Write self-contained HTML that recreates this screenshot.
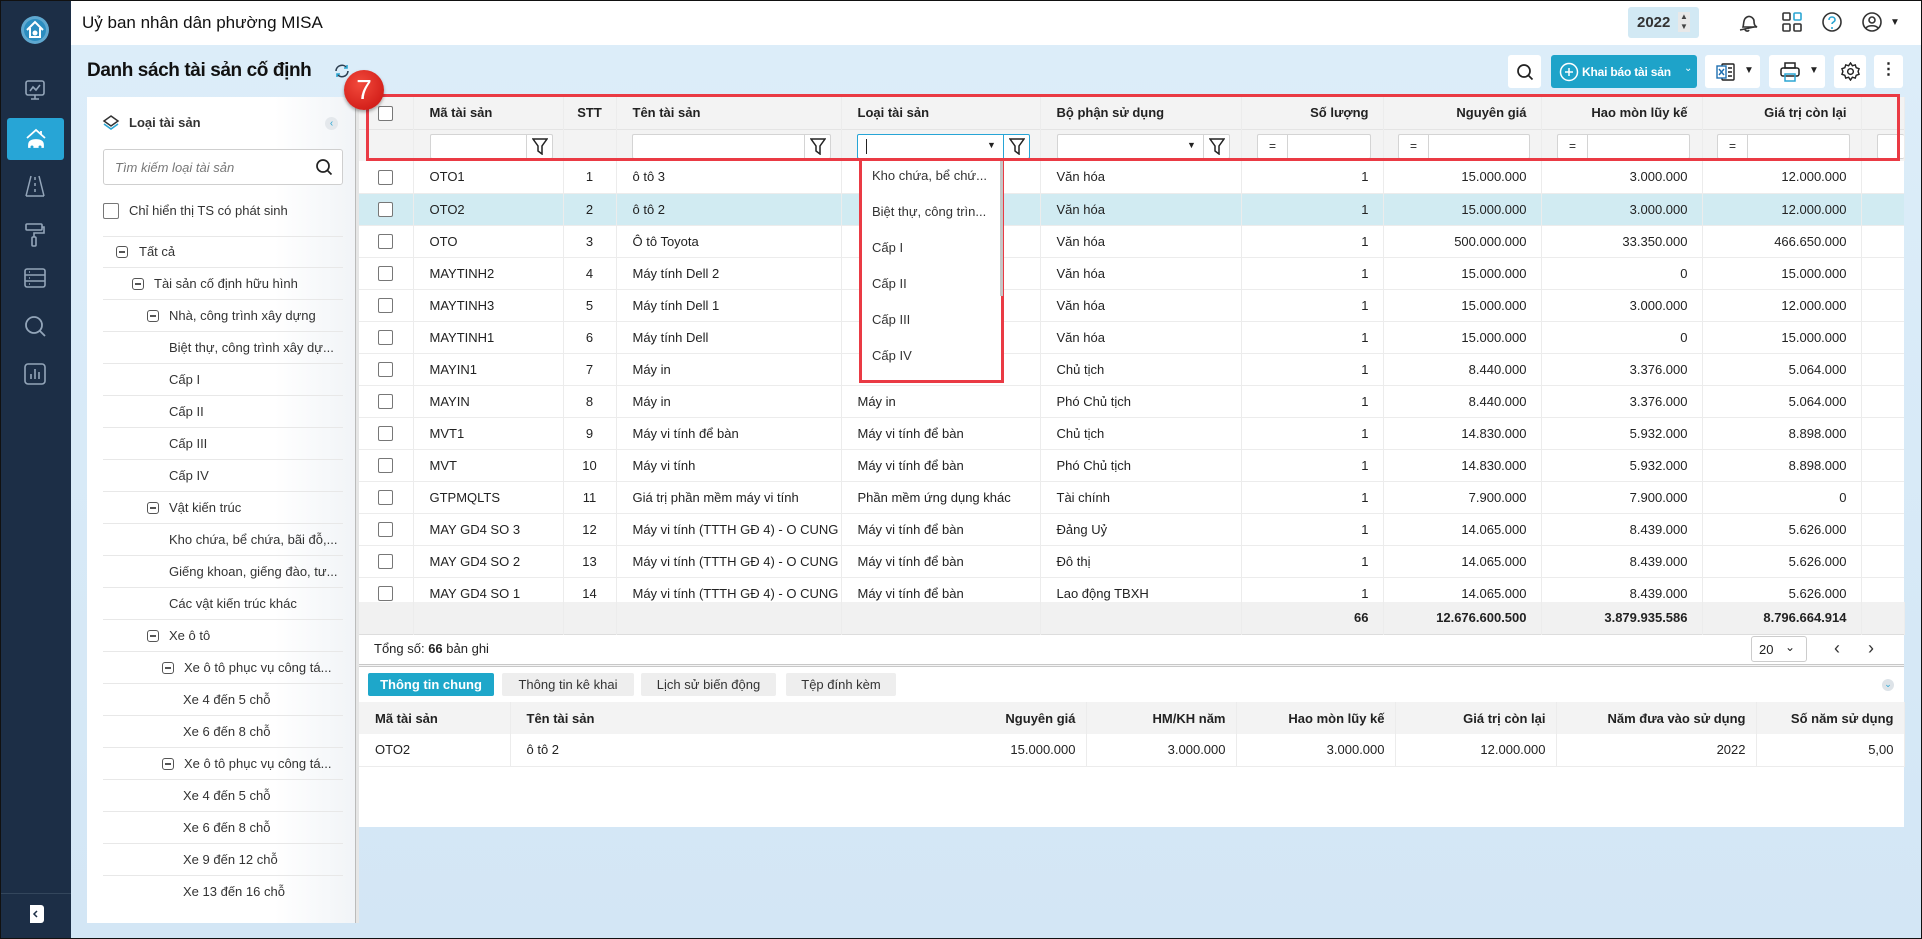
<!DOCTYPE html>
<html><head><meta charset="utf-8"><style>
*{box-sizing:border-box;margin:0;padding:0}
body{width:1922px;height:939px;overflow:hidden;font-family:"Liberation Sans",sans-serif;font-size:13px;color:#222;background:#d9eaf6;position:relative}
.a{position:absolute}
#frame{position:absolute;left:0;top:0;width:1922px;height:939px;border:1px solid #111;pointer-events:none;z-index:50}
#side{left:0;top:0;width:71px;height:939px;background:#1c2e46}
#top{left:71px;top:0;width:1851px;height:45px;background:#fff}
#bg{left:71px;top:45px;width:1851px;height:894px;background:linear-gradient(180deg,#dcedf9,#d3e6f5)}
.ico{position:absolute;left:23px}
.btn{position:absolute;background:#fff;border-radius:3px;top:55px;height:33px}
#lp{left:87px;top:97px;width:268px;height:826px;background:linear-gradient(90deg,#fff 70%,#f1f4f7)}
.tr{position:absolute;left:103px;width:240px;height:32px;border-bottom:1px solid #e8e8e8;line-height:32px;white-space:nowrap;font-size:13px;color:#333}
.mb{display:inline-block;width:12px;height:12px;border:1.5px solid #555;border-radius:3px;position:absolute;top:10px}
.mb:after{content:"";position:absolute;left:2px;right:2px;top:4px;height:1.5px;background:#555}
#main{left:359px;top:97px;width:1545px;height:730px;background:#fff}
table{border-collapse:collapse;table-layout:fixed}
td,th{height:32px;white-space:nowrap;overflow:hidden;padding:0 16px;border-right:1px solid #ececec;font-size:13px}
th{font-weight:bold;text-align:left;background:#f3f3f3;color:#222}
.r{text-align:right;padding-right:14px}
.c{text-align:center;padding:0}
tr.b td{border-bottom:1px solid #ececec}
.cb{display:inline-block;width:15px;height:15px;border:1px solid #777;border-radius:2px;background:#fff;vertical-align:middle}
.inp{position:absolute;height:25px;background:#fff;border:1px solid #d4d4d4;border-radius:2px}
.fn{position:absolute;right:0;top:0;width:26px;height:23px;border-left:1px solid #d4d4d4}
.eq{position:absolute;left:0;top:0;width:30px;height:23px;border-right:1px solid #d4d4d4;text-align:center;line-height:23px;font-size:12px}
.tab{position:absolute;top:673px;height:23px;line-height:23px;text-align:center;background:#eeeeee;border-radius:2px;font-size:13px;color:#333}
.dd{position:absolute;left:872px;font-size:13px;color:#333}
</style></head><body>
<div id="frame"></div>
<div id="side" class="a">
 <svg class="a" style="left:21px;top:16px" width="28" height="28" viewBox="0 0 28 28"><circle cx="14" cy="14" r="14" fill="#5fa8d0"/><circle cx="14" cy="14" r="11" fill="#2b8dc0"/><path d="M6 14 L14 6 L22 14 M9 12 V21 H19 V12" stroke="#fff" stroke-width="2" fill="none"/><circle cx="14" cy="17" r="2.5" fill="#fff"/></svg>
 <svg class="ico" style="top:78px" width="24" height="24" viewBox="0 0 24 24" fill="none" stroke="#93a5b9" stroke-width="1.6"><rect x="3" y="3" width="18" height="14" rx="2"/><path d="M12 17v4M8 21h8M7 13l3-4 3 3 4-5"/></svg>
 <div class="a" style="left:7px;top:118px;width:57px;height:42px;background:#27a5d6;border-radius:3px"></div>
 <svg class="ico" style="top:126px" width="26" height="26" viewBox="0 0 26 26" fill="none" stroke="#fff" stroke-width="1.8"><path d="M4 12 L13 4 L22 12"/><path d="M18 5v4"/><path d="M6 19c0-3 2-5 7-5s7 2 7 5v2H6z" fill="#fff"/><circle cx="9" cy="21" r="1.5" fill="#27a5d6" stroke="none"/><circle cx="17" cy="21" r="1.5" fill="#27a5d6" stroke="none"/></svg>
 <svg class="ico" style="top:174px" width="24" height="24" viewBox="0 0 24 24" fill="none" stroke="#93a5b9" stroke-width="1.5"><path d="M8 2L3 22M16 2l5 20M12 3v3M12 9v3M12 15v3M3 22h18"/></svg>
 <svg class="ico" style="top:222px" width="24" height="26" viewBox="0 0 24 26" fill="none" stroke="#93a5b9" stroke-width="1.6"><rect x="3" y="2" width="16" height="6" rx="1"/><path d="M19 5h2v6H11v4"/><rect x="9" y="15" width="4" height="9" rx="1"/></svg>
 <svg class="ico" style="top:267px" width="24" height="22" viewBox="0 0 24 22" fill="none" stroke="#93a5b9" stroke-width="1.6"><rect x="2" y="2" width="20" height="18" rx="2"/><path d="M2 8h20M2 14h20M6 5h1M6 11h1M6 17h1"/></svg>
 <svg class="ico" style="top:314px" width="24" height="24" viewBox="0 0 24 24" fill="none" stroke="#93a5b9" stroke-width="1.8"><circle cx="11" cy="11" r="8"/><path d="M17 17l5 5"/></svg>
 <svg class="ico" style="top:362px" width="24" height="24" viewBox="0 0 24 24" fill="none" stroke="#93a5b9" stroke-width="1.6"><rect x="2" y="2" width="20" height="20" rx="3"/><path d="M8 17v-5M12 17V7M16 17v-7"/></svg>
 <div class="a" style="left:0;top:893px;width:71px;height:1px;background:#33465c"></div>
 <svg class="a" style="left:25px;top:904px" width="20" height="20" viewBox="0 0 20 20"><rect x="1" y="1" width="18" height="18" rx="3" fill="#fff"/><rect x="1" y="1" width="4" height="18" fill="#1c2e46"/><path d="M12 7l-3 3 3 3" stroke="#1c2e46" stroke-width="1.5" fill="none"/></svg>
</div>
<div id="top" class="a">
 <div class="a" style="left:11px;top:13px;font-size:17px;color:#111">Uỷ ban nhân dân phường MISA</div>
 <div class="a" style="left:1557px;top:7px;width:71px;height:31px;background:#d2e9f4;border-radius:3px"><span class="a" style="left:9px;top:7px;font-weight:bold;font-size:15px;color:#333">2022</span><span class="a" style="left:50px;top:5px;width:12px;height:20px;background:#e8e8e8;font-size:8px;line-height:10px;text-align:center;color:#444">▲<br>▼</span></div>
 <svg class="a" style="left:1666px;top:12px" width="22" height="22" viewBox="0 0 22 22" fill="none" stroke="#333" stroke-width="1.6"><path d="M6 15c1-3 0-8 4-10s7 2 7 4c0 4 1 5 3 6z"/><path d="M3 18l14-3M8 17c0 2 3 3 4 1"/></svg>
 <svg class="a" style="left:1711px;top:12px" width="20" height="20" viewBox="0 0 20 20" fill="none" stroke="#333" stroke-width="1.6"><rect x="1" y="1" width="7" height="7" rx="1"/><rect x="12" y="1" width="7" height="7" rx="1" stroke="#2ba6d3"/><rect x="1" y="12" width="7" height="7" rx="1"/><rect x="12" y="12" width="7" height="7" rx="1"/></svg>
 <svg class="a" style="left:1750px;top:11px" width="22" height="22" viewBox="0 0 22 22" fill="none" stroke="#333" stroke-width="1.6"><circle cx="11" cy="11" r="9"/><path d="M8 9c0-2 1.5-3 3-3s3 1 3 3-3 2-3 4" stroke="#2ba6d3"/><path d="M11 16v2" stroke="#2ba6d3"/></svg>
 <svg class="a" style="left:1790px;top:11px" width="22" height="22" viewBox="0 0 22 22" fill="none" stroke="#333" stroke-width="1.6"><circle cx="11" cy="11" r="9"/><circle cx="11" cy="9" r="3"/><path d="M5 17c2-3 10-3 12 0"/></svg>
 <div class="a" style="left:1819px;top:17px;font-size:10px">▼</div>
</div>
<div id="bg" class="a"></div>
<div class="a" style="left:87px;top:60px;font-size:19px;font-weight:bold;letter-spacing:-0.4px;color:#111">Danh sách tài sản cố định</div>
<svg class="a" style="left:333px;top:63px" width="18" height="16" viewBox="0 0 18 16" fill="none" stroke="#2c3e50" stroke-width="1.6"><path d="M3 8a6 6 0 0 1 11-3M15 8a6 6 0 0 1-11 3"/><path d="M14 2v3h-3M4 14v-3h3" stroke="#2ba6d3"/></svg>
<div class="btn" style="left:1508px;width:33px"><svg class="a" style="left:8px;top:8px" width="18" height="18" viewBox="0 0 18 18" fill="none" stroke="#222" stroke-width="1.7"><circle cx="8" cy="8" r="6"/><path d="M12.5 12.5l4 4"/></svg></div>
<div class="btn" style="left:1551px;width:146px;background:#1ea3c9"><svg class="a" style="left:8px;top:7px" width="20" height="20" viewBox="0 0 20 20" fill="none" stroke="#fff" stroke-width="1.5"><circle cx="10" cy="10" r="8.5"/><path d="M10 6v8M6 10h8"/></svg><span class="a" style="left:31px;top:10px;color:#fff;font-weight:bold;font-size:12px;letter-spacing:-0.2px">Khai báo tài sản</span><span class="a" style="left:133px;top:8px;color:#fff;font-size:10px">⌄</span></div>
<div class="btn" style="left:1705px;width:55px"><svg class="a" style="left:11px;top:8px" width="20" height="18" viewBox="0 0 20 18" fill="none" stroke="#222" stroke-width="1.4"><rect x="6" y="1" width="12" height="16" rx="1"/><path d="M12 5h4M12 9h4M12 13h4"/><rect x="1" y="3" width="9" height="12" fill="#fff" stroke="#1e6fb0"/><path d="M3 6l5 6M8 6l-5 6" stroke="#1e6fb0"/></svg><span class="a" style="left:39px;top:10px;font-size:10px">▼</span></div>
<div class="btn" style="left:1769px;width:56px"><svg class="a" style="left:11px;top:7px" width="20" height="20" viewBox="0 0 20 20" fill="none" stroke="#222" stroke-width="1.5"><rect x="5" y="1" width="10" height="5"/><rect x="1" y="6" width="18" height="8" rx="2"/><rect x="5" y="12" width="10" height="7" stroke="#2ba6d3"/></svg><span class="a" style="left:40px;top:10px;font-size:10px">▼</span></div>
<div class="btn" style="left:1834px;width:32px"><svg class="a" style="left:7px;top:7px" width="19" height="19" viewBox="0 0 20 20" fill="none" stroke="#222" stroke-width="1.5"><circle cx="10" cy="10" r="3"/><path d="M10 1l2 3 3-1 1 3 3 1-1 3 1 3-3 1-1 3-3-1-2 3-2-3-3 1-1-3-3-1 1-3-1-3 3-1 1-3 3 1z"/></svg></div>
<div class="btn" style="left:1874px;width:29px;text-align:center;font-weight:bold;font-size:16px;line-height:30px">⋮</div>
<div id="lp" class="a"></div>
<svg class="a" style="left:102px;top:114px" width="18" height="18" viewBox="0 0 18 18"><path d="M9 2l7 5-7 5-7-5z" fill="none" stroke="#333" stroke-width="1.5"/><path d="M2 10l7 5 7-5" fill="none" stroke="#2ba6d3" stroke-width="1.6"/></svg>
<div class="a" style="left:129px;top:115px;font-weight:bold;font-size:13px;color:#333">Loại tài sản</div>
<div class="a" style="left:325px;top:117px;width:13px;height:13px;border-radius:50%;background:#e4e8ec;color:#2ba6d3;font-size:10px;line-height:13px;text-align:center">‹</div>
<div class="a" style="left:103px;top:149px;width:240px;height:36px;border:1px solid #cfcfcf;border-radius:3px;background:#fff"><span class="a" style="left:11px;top:10px;font-style:italic;color:#777;font-size:13px">Tìm kiếm loại tài sản</span><svg class="a" style="left:211px;top:8px" width="18" height="18" viewBox="0 0 18 18" fill="none" stroke="#222" stroke-width="1.7"><circle cx="8" cy="8" r="6"/><path d="M12.5 12.5l4 4"/></svg></div>
<span class="cb a" style="left:103px;top:203px;width:16px;height:16px"></span>
<div class="a" style="left:129px;top:203px;color:#333">Chỉ hiển thị TS có phát sinh</div>
<div class="a" style="left:103px;top:236px;width:240px;height:1px;background:#e8e8e8"></div>
<div class="tr" style="top:236px"><span class="mb" style="left:13px"></span><span class="a" style="left:36px">Tất cả</span></div>
<div class="tr" style="top:268px"><span class="mb" style="left:29px"></span><span class="a" style="left:51px">Tài sản cố định hữu hình</span></div>
<div class="tr" style="top:300px"><span class="mb" style="left:44px"></span><span class="a" style="left:66px">Nhà, công trình xây dựng</span></div>
<div class="tr" style="top:332px"><span class="a" style="left:66px">Biệt thự, công trình xây dự...</span></div>
<div class="tr" style="top:364px"><span class="a" style="left:66px">Cấp I</span></div>
<div class="tr" style="top:396px"><span class="a" style="left:66px">Cấp II</span></div>
<div class="tr" style="top:428px"><span class="a" style="left:66px">Cấp III</span></div>
<div class="tr" style="top:460px"><span class="a" style="left:66px">Cấp IV</span></div>
<div class="tr" style="top:492px"><span class="mb" style="left:44px"></span><span class="a" style="left:66px">Vật kiến trúc</span></div>
<div class="tr" style="top:524px"><span class="a" style="left:66px">Kho chứa, bể chứa, bãi đỗ,...</span></div>
<div class="tr" style="top:556px"><span class="a" style="left:66px">Giếng khoan, giếng đào, tư...</span></div>
<div class="tr" style="top:588px"><span class="a" style="left:66px">Các vật kiến trúc khác</span></div>
<div class="tr" style="top:620px"><span class="mb" style="left:44px"></span><span class="a" style="left:66px">Xe ô tô</span></div>
<div class="tr" style="top:652px"><span class="mb" style="left:59px"></span><span class="a" style="left:81px">Xe ô tô phục vụ công tá...</span></div>
<div class="tr" style="top:684px"><span class="a" style="left:80px">Xe 4 đến 5 chỗ</span></div>
<div class="tr" style="top:716px"><span class="a" style="left:80px">Xe 6 đến 8 chỗ</span></div>
<div class="tr" style="top:748px"><span class="mb" style="left:59px"></span><span class="a" style="left:81px">Xe ô tô phục vụ công tá...</span></div>
<div class="tr" style="top:780px"><span class="a" style="left:80px">Xe 4 đến 5 chỗ</span></div>
<div class="tr" style="top:812px"><span class="a" style="left:80px">Xe 6 đến 8 chỗ</span></div>
<div class="tr" style="top:844px"><span class="a" style="left:80px">Xe 9 đến 12 chỗ</span></div>
<div class="tr" style="top:876px;border:none"><span class="a" style="left:80px">Xe 13 đến 16 chỗ</span></div>
<div class="a" style="left:355px;top:97px;width:4px;height:826px;background:#e6e6e6;border-left:1px solid #bbb"></div>
<div id="main" class="a"></div>
<table class="a" style="left:359px;top:97px;width:1545px">
<colgroup><col style="width:54px"><col style="width:150px"><col style="width:53px"><col style="width:225px"><col style="width:199px"><col style="width:201px"><col style="width:142px"><col style="width:158px"><col style="width:161px"><col style="width:159px"><col style="width:43px"></colgroup>
<tr><th class="c"><span class="cb"></span></th><th>Mã tài sản</th><th class="c">STT</th><th>Tên tài sản</th><th>Loại tài sản</th><th>Bộ phận sử dụng</th><th class="r">Số lượng</th><th class="r">Nguyên giá</th><th class="r">Hao mòn lũy kế</th><th class="r">Giá trị còn lại</th><th></th></tr>
<tr><th style="border-top:1px solid #e4e4e4"></th><th style="border-top:1px solid #e4e4e4"></th><th style="border-top:1px solid #e4e4e4"></th><th style="border-top:1px solid #e4e4e4"></th><th style="border-top:1px solid #e4e4e4"></th><th style="border-top:1px solid #e4e4e4"></th><th style="border-top:1px solid #e4e4e4"></th><th style="border-top:1px solid #e4e4e4"></th><th style="border-top:1px solid #e4e4e4"></th><th style="border-top:1px solid #e4e4e4"></th><th style="border-top:1px solid #e4e4e4"></th></tr>
</table>
<div class="inp" style="left:430px;top:134px;width:123px"><div class="fn"><svg class="a" style="left:5px;top:3px" width="16" height="17" viewBox="0 0 16 17" fill="none" stroke="#222" stroke-width="1.5"><path d="M1 1h14l-5 7v8l-4-3V8z"/></svg></div></div>
<div class="inp" style="left:632px;top:134px;width:199px"><div class="fn"><svg class="a" style="left:5px;top:3px" width="16" height="17" viewBox="0 0 16 17" fill="none" stroke="#222" stroke-width="1.5"><path d="M1 1h14l-5 7v8l-4-3V8z"/></svg></div></div>
<div class="inp" style="left:857px;top:134px;width:173px;border-color:#27a5d6"><span class="a" style="left:8px;top:4px;width:1px;height:15px;background:#222"></span><span class="a" style="left:129px;top:5px;font-size:9px">▼</span><div class="fn" style="border-color:#27a5d6"><svg class="a" style="left:5px;top:3px" width="16" height="17" viewBox="0 0 16 17" fill="none" stroke="#222" stroke-width="1.5"><path d="M1 1h14l-5 7v8l-4-3V8z"/></svg></div></div>
<div class="inp" style="left:1057px;top:134px;width:173px"><span class="a" style="left:129px;top:5px;font-size:9px">▼</span><div class="fn"><svg class="a" style="left:5px;top:3px" width="16" height="17" viewBox="0 0 16 17" fill="none" stroke="#222" stroke-width="1.5"><path d="M1 1h14l-5 7v8l-4-3V8z"/></svg></div></div>
<div class="inp" style="left:1257px;top:134px;width:114px"><div class="eq">=</div></div>
<div class="inp" style="left:1398px;top:134px;width:132px"><div class="eq">=</div></div>
<div class="inp" style="left:1557px;top:134px;width:133px"><div class="eq">=</div></div>
<div class="inp" style="left:1717px;top:134px;width:133px"><div class="eq">=</div></div>
<div class="inp" style="left:1877px;top:134px;width:27px;border-right:none"></div>
<div class="a" style="left:359px;top:161px;width:1545px;height:441px;overflow:hidden">
<table style="width:1545px">
<colgroup><col style="width:54px"><col style="width:150px"><col style="width:53px"><col style="width:225px"><col style="width:199px"><col style="width:201px"><col style="width:142px"><col style="width:158px"><col style="width:161px"><col style="width:159px"><col style="width:43px"></colgroup>
<tr class="b"><td class="c"><span class="cb"></span></td><td>OTO1</td><td class="c">1</td><td>ô tô 3</td><td></td><td>Văn hóa</td><td class="r">1</td><td class="r">15.000.000</td><td class="r">3.000.000</td><td class="r">12.000.000</td><td></td></tr>
<tr class="b" style="background:#d1ebf2"><td class="c"><span class="cb"></span></td><td>OTO2</td><td class="c">2</td><td>ô tô 2</td><td></td><td>Văn hóa</td><td class="r">1</td><td class="r">15.000.000</td><td class="r">3.000.000</td><td class="r">12.000.000</td><td></td></tr>
<tr class="b"><td class="c"><span class="cb"></span></td><td>OTO</td><td class="c">3</td><td>Ô tô Toyota</td><td></td><td>Văn hóa</td><td class="r">1</td><td class="r">500.000.000</td><td class="r">33.350.000</td><td class="r">466.650.000</td><td></td></tr>
<tr class="b"><td class="c"><span class="cb"></span></td><td>MAYTINH2</td><td class="c">4</td><td>Máy tính Dell 2</td><td></td><td>Văn hóa</td><td class="r">1</td><td class="r">15.000.000</td><td class="r">0</td><td class="r">15.000.000</td><td></td></tr>
<tr class="b"><td class="c"><span class="cb"></span></td><td>MAYTINH3</td><td class="c">5</td><td>Máy tính Dell 1</td><td></td><td>Văn hóa</td><td class="r">1</td><td class="r">15.000.000</td><td class="r">3.000.000</td><td class="r">12.000.000</td><td></td></tr>
<tr class="b"><td class="c"><span class="cb"></span></td><td>MAYTINH1</td><td class="c">6</td><td>Máy tính Dell</td><td></td><td>Văn hóa</td><td class="r">1</td><td class="r">15.000.000</td><td class="r">0</td><td class="r">15.000.000</td><td></td></tr>
<tr class="b"><td class="c"><span class="cb"></span></td><td>MAYIN1</td><td class="c">7</td><td>Máy in</td><td></td><td>Chủ tịch</td><td class="r">1</td><td class="r">8.440.000</td><td class="r">3.376.000</td><td class="r">5.064.000</td><td></td></tr>
<tr class="b"><td class="c"><span class="cb"></span></td><td>MAYIN</td><td class="c">8</td><td>Máy in</td><td>Máy in</td><td>Phó Chủ tịch</td><td class="r">1</td><td class="r">8.440.000</td><td class="r">3.376.000</td><td class="r">5.064.000</td><td></td></tr>
<tr class="b"><td class="c"><span class="cb"></span></td><td>MVT1</td><td class="c">9</td><td>Máy vi tính để bàn</td><td>Máy vi tính để bàn</td><td>Chủ tịch</td><td class="r">1</td><td class="r">14.830.000</td><td class="r">5.932.000</td><td class="r">8.898.000</td><td></td></tr>
<tr class="b"><td class="c"><span class="cb"></span></td><td>MVT</td><td class="c">10</td><td>Máy vi tính</td><td>Máy vi tính để bàn</td><td>Phó Chủ tịch</td><td class="r">1</td><td class="r">14.830.000</td><td class="r">5.932.000</td><td class="r">8.898.000</td><td></td></tr>
<tr class="b"><td class="c"><span class="cb"></span></td><td>GTPMQLTS</td><td class="c">11</td><td>Giá trị phần mềm máy vi tính</td><td>Phần mềm ứng dụng khác</td><td>Tài chính</td><td class="r">1</td><td class="r">7.900.000</td><td class="r">7.900.000</td><td class="r">0</td><td></td></tr>
<tr class="b"><td class="c"><span class="cb"></span></td><td>MAY GD4 SO 3</td><td class="c">12</td><td>Máy vi tính (TTTH GĐ 4) - O CUNG</td><td>Máy vi tính để bàn</td><td>Đảng Uỷ</td><td class="r">1</td><td class="r">14.065.000</td><td class="r">8.439.000</td><td class="r">5.626.000</td><td></td></tr>
<tr class="b"><td class="c"><span class="cb"></span></td><td>MAY GD4 SO 2</td><td class="c">13</td><td>Máy vi tính (TTTH GĐ 4) - O CUNG</td><td>Máy vi tính để bàn</td><td>Đô thị</td><td class="r">1</td><td class="r">14.065.000</td><td class="r">8.439.000</td><td class="r">5.626.000</td><td></td></tr>
<tr class="b"><td class="c"><span class="cb"></span></td><td>MAY GD4 SO 1</td><td class="c">14</td><td>Máy vi tính (TTTH GĐ 4) - O CUNG</td><td>Máy vi tính để bàn</td><td>Lao động TBXH</td><td class="r">1</td><td class="r">14.065.000</td><td class="r">8.439.000</td><td class="r">5.626.000</td><td></td></tr>
</table></div>
<table class="a" style="left:359px;top:602px;width:1545px;background:#f1f1f1;border-bottom:1px solid #ddd">
<colgroup><col style="width:54px"><col style="width:150px"><col style="width:53px"><col style="width:225px"><col style="width:199px"><col style="width:201px"><col style="width:142px"><col style="width:158px"><col style="width:161px"><col style="width:159px"><col style="width:43px"></colgroup>
<tr><td style="height:31px"></td><td></td><td></td><td></td><td></td><td></td><td class="r"><b>66</b></td><td class="r"><b>12.676.600.500</b></td><td class="r"><b>3.879.935.586</b></td><td class="r"><b>8.796.664.914</b></td><td></td></tr>
</table>
<div class="a" style="left:374px;top:641px;font-size:13px">Tổng số: <b>66</b> bản ghi</div>
<div class="a" style="left:1751px;top:636px;width:56px;height:26px;border:1px solid #ccc;border-radius:3px;background:#fff"><span class="a" style="left:7px;top:5px">20</span><span class="a" style="left:33px;top:3px;font-size:12px">⌄</span></div>
<div class="a" style="left:1834px;top:638px;font-size:18px;color:#333">‹</div>
<div class="a" style="left:1868px;top:638px;font-size:18px;color:#333">›</div>
<div class="a" style="left:359px;top:664px;width:1545px;height:3px;border-top:1px solid #c8c8c8;border-bottom:1px solid #c8c8c8;background:#f4f4f4"></div>
<div class="tab" style="left:368px;width:126px;background:#1ea7ca;color:#fff;font-weight:bold">Thông tin chung</div>
<div class="tab" style="left:502px;width:132px">Thông tin kê khai</div>
<div class="tab" style="left:641px;width:135px">Lịch sử biến động</div>
<div class="tab" style="left:786px;width:110px">Tệp đính kèm</div>
<div class="a" style="left:1882px;top:679px;width:12px;height:12px;border-radius:50%;background:#dde3e8;color:#2ba6d3;font-size:9px;line-height:11px;text-align:center">⌄</div>
<table class="a" style="left:359px;top:702px;width:1545px">
<colgroup><col style="width:151px"><col style="width:426px"><col style="width:150px"><col style="width:150px"><col style="width:159px"><col style="width:161px"><col style="width:200px"><col style="width:148px"></colgroup>
<tr><th style="padding-left:16px">Mã tài sản</th><th style="border-right:none">Tên tài sản</th><th class="r" style="padding-right:10px">Nguyên giá</th><th class="r" style="padding-right:10px">HM/KH năm</th><th class="r" style="padding-right:10px">Hao mòn lũy kế</th><th class="r" style="padding-right:10px">Giá trị còn lại</th><th class="r" style="padding-right:10px">Năm đưa vào sử dụng</th><th class="r" style="padding-right:10px">Số năm sử dụng</th></tr>
<tr class="b"><td>OTO2</td><td style="border-right:none">ô tô 2</td><td class="r" style="padding-right:10px">15.000.000</td><td class="r" style="padding-right:10px">3.000.000</td><td class="r" style="padding-right:10px">3.000.000</td><td class="r" style="padding-right:10px">12.000.000</td><td class="r" style="padding-right:10px">2022</td><td class="r" style="padding-right:10px">5,00</td></tr>
</table>
<div class="a" style="left:366px;top:94px;width:1534px;height:67px;border:3px solid #ea3a44;z-index:5"></div>
<div class="a" style="left:344px;top:70px;width:40px;height:40px;border-radius:50%;background:radial-gradient(circle at 40% 35%,#f24a3c,#c8100e);box-shadow:0 2px 3px rgba(0,0,0,.35);color:#fff;font-size:28px;text-align:center;line-height:40px;z-index:6">7</div>
<div class="a" style="left:859px;top:158px;width:145px;height:225px;background:#fff;border:3px solid #ea3a44;z-index:6">
<div class="a" style="left:138px;top:0;width:3px;height:135px;background:#c6c6c6"></div>
</div>
<div class="dd" style="top:168px;z-index:7">Kho chứa, bể chứ...</div>
<div class="dd" style="top:204px;z-index:7">Biệt thự, công trìn...</div>
<div class="dd" style="top:240px;z-index:7">Cấp I</div>
<div class="dd" style="top:276px;z-index:7">Cấp II</div>
<div class="dd" style="top:312px;z-index:7">Cấp III</div>
<div class="dd" style="top:348px;z-index:7">Cấp IV</div>
</body></html>
